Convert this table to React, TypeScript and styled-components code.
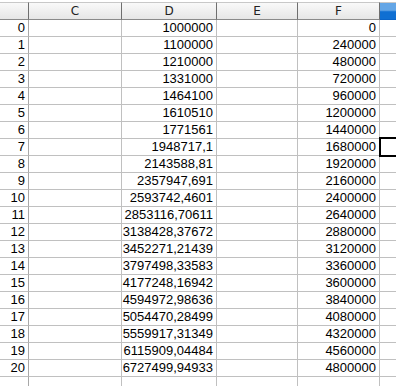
import React from "react";
import styled, { createGlobalStyle } from "styled-components";

const GlobalStyle = createGlobalStyle`
  html, body {
    margin: 0;
    padding: 0;
    background: #ffffff;
  }
`;

const Sheet = styled.div`
  display: grid;
  grid-template-columns: 29px 93px 95px 81px 82px 1fr;
  width: 396px;
  height: 386px;
  overflow: hidden;
  padding-top: 2px;
  box-sizing: border-box;
  font-family: "Liberation Sans", Arial, sans-serif;
  font-size: 13px;
  color: #000;
`;

const HeaderCell = styled.div<{ $selected?: boolean }>`
  height: 16px;
  border-top: 1px solid #c8c8c8;
  border-bottom: 1px solid ${(p) => (p.$selected ? "#0a64c8" : "#8a8a8a")};
  border-right: ${(p) => (p.$selected ? "none" : "1px solid #6f6f6f")};
  background: ${(p) =>
    p.$selected
      ? "linear-gradient(#64a6e6 0%, #64a6e6 45%, #0f6fd2 55%, #0f6fd2 100%)"
      : "linear-gradient(#f9f9f9, #e6e6e6)"};
  display: flex;
  align-items: center;
  justify-content: center;
  font-family: "DejaVu Sans", sans-serif;
  font-size: 12px;
  color: #222;
`;

const RowHead = styled.div`
  height: 16px;
  border-bottom: 1px solid #c0c0c0;
  border-right: 1px solid #a8a8a8;
  display: flex;
  align-items: center;
  justify-content: flex-end;
  padding-right: 3px;
  line-height: 16px;
`;

const Cell = styled.div`
  height: 16px;
  border-bottom: 1px solid #c0c0c0;
  border-right: 1px solid #c0c0c0;
  display: flex;
  align-items: center;
  justify-content: flex-end;
  padding-right: 3px;
  line-height: 16px;
  white-space: nowrap;
`;

const CursorCell = styled.div`
  position: relative;
  height: 16px;
  border-bottom: 1px solid #c0c0c0;
`;

const CursorBox = styled.div`
  position: absolute;
  left: -1px;
  top: -2px;
  right: -4px;
  bottom: -2px;
  border: 2px solid #000;
`;

const dValues = [
  "1000000",
  "1100000",
  "1210000",
  "1331000",
  "1464100",
  "1610510",
  "1771561",
  "1948717,1",
  "2143588,81",
  "2357947,691",
  "2593742,4601",
  "2853116,70611",
  "3138428,37672",
  "3452271,21439",
  "3797498,33583",
  "4177248,16942",
  "4594972,98636",
  "5054470,28499",
  "5559917,31349",
  "6115909,04484",
  "6727499,94933",
];

const App: React.FC = () => {
  return (
    <>
      <GlobalStyle />
      <Sheet>
        <HeaderCell />
        <HeaderCell>C</HeaderCell>
        <HeaderCell>D</HeaderCell>
        <HeaderCell>E</HeaderCell>
        <HeaderCell>F</HeaderCell>
        <HeaderCell $selected />
        {dValues.map((d, i) => (
          <React.Fragment key={i}>
            <RowHead>{i}</RowHead>
            <Cell />
            <Cell>{d}</Cell>
            <Cell />
            <Cell>{i * 240000}</Cell>
            <CursorCell>{i === 7 && <CursorBox />}</CursorCell>
          </React.Fragment>
        ))}
        <RowHead />
        <Cell />
        <Cell />
        <Cell />
        <Cell />
        <CursorCell />
      </Sheet>
    </>
  );
};

export default App;
